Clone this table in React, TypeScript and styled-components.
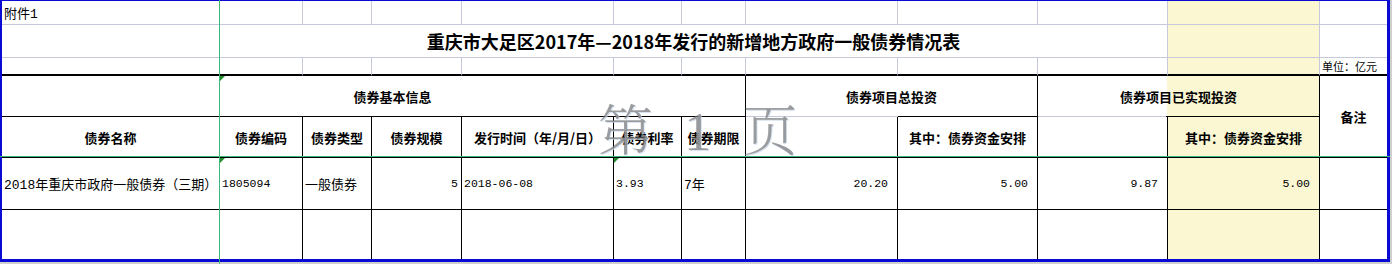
import React from 'react';
import styled, {createGlobalStyle} from 'styled-components';

const GRID = '#c6c9db'
const LINE = '#000'
const YELLOW = '#faf7d2'
const BLUE = '#0a0ad2'
const GREEN = '#3cb878'

type Edge = 'grid' | 'line' | 'thick' | 'none'

const edge = (e?: Edge) => {
    if (e === 'none') return 'none'
    if (e === 'thick') return `2px solid ${LINE}`
    if (e === 'line') return `1px solid ${LINE}`
    return `1px solid ${GRID}`
}

const GlobalStyle = createGlobalStyle`
  body {
    margin: 0;
    background: #cfcfcf;
  }
`

const Frame = styled.div`
  position: relative;
  width: 1390px;
  height: 264px;
`

const Sheet = styled.table`
  border-collapse: separate;
  border-spacing: 0;
  table-layout: fixed;
  width: 1390px;
  background: #fff;
  border-style: solid;
  border-color: ${BLUE};
  border-width: 1px 3px 3px 2px;
  font-family: "Liberation Mono", "Noto Sans CJK SC", monospace;
  font-size: 13px;
  color: #000;
`

const Col = styled.col<{ $w: number }>`
  width: ${p => p.$w}px;
`

const Row = styled.tr<{ $h: number }>`
  height: ${p => p.$h}px;
`

type CellProps = {
    $r?: Edge
    $b?: Edge
    $yellow?: boolean
}

const Cell = styled.td<CellProps>`
  position: relative;
  box-sizing: border-box;
  padding: 0 2px;
  border-right: ${p => edge(p.$r)};
  border-bottom: ${p => edge(p.$b)};
  background: ${p => (p.$yellow ? YELLOW : 'transparent')};
  vertical-align: middle;
  white-space: nowrap;
`

const HeadCell = styled(Cell)<{ $shift?: number }>`
  font-family: "Noto Sans CJK SC", sans-serif;
  font-weight: 700;
  font-size: 13px;
  text-align: center;
  padding-right: ${p => (p.$shift ? p.$shift : 2)}px;
`

// merged header whose lower edge is partly a grid line and partly a black rule
const SplitHead = styled(HeadCell)<{ $split: number; $fill?: boolean }>`
  border-right: 1px solid ${LINE};
  border-bottom: 1px solid ${LINE};
  border-image: linear-gradient(to right, ${GRID} ${p => p.$split}px, ${LINE} ${p => p.$split}px) 1;
  background: ${p => (p.$fill ? `linear-gradient(to right, #fff ${p.$split}px, ${YELLOW} ${p.$split}px)` : '#fff')};
`

const TitleCell = styled(Cell)`
  font-family: "Noto Sans CJK SC", sans-serif;
  font-weight: 700;
  font-size: 18px;
  text-align: center;
`

const NoteCell = styled(Cell)`
  font-family: "Noto Sans CJK SC", sans-serif;
  font-size: 11px;
  padding-left: 2px;
`

const DataCell = styled(Cell)<{ $num?: boolean; $right?: number }>`
  font-size: ${p => (p.$num ? '11.5px' : '13px')};
  text-align: ${p => (p.$right !== undefined ? 'right' : 'left')};
  padding-right: ${p => (p.$right !== undefined ? p.$right : 2)}px;
`

const Flag = styled.span`
  position: absolute;
  top: 0;
  left: 0;
  border-top: 5px solid #1f8f2a;
  border-right: 5px solid transparent;
`

const FreezeV = styled.div`
  position: absolute;
  left: 219px;
  top: 0;
  width: 1px;
  height: 264px;
  background: ${GREEN};
`

const FreezeH = styled.div`
  position: absolute;
  left: 0;
  top: 156px;
  width: 1390px;
  height: 1px;
  background: ${GREEN};
`

const Watermark = styled.div`
  position: absolute;
  left: 598px;
  top: 104px;
  display: flex;
  gap: 31px;
  font-family: "Liberation Serif", "Noto Serif CJK SC", "Noto Sans CJK SC", serif;
  font-weight: 300;
  font-size: 55px;
  line-height: 1;
  color: rgba(125, 125, 125, 0.72);
  text-shadow: 1px 1px 0 rgba(200, 215, 235, 0.7);
  pointer-events: none;
`

const cols = [218, 83, 69, 90, 152, 68, 64, 152, 140, 130, 152, 67]

const plainRow = (b: Edge) =>
    cols.map((_, i) => (
        <Cell key={i} $b={b} $r={i === 11 ? 'none' : 'grid'} $yellow={i === 10}/>
    ))

export default function App() {
    return (
        <>
            <GlobalStyle/>
            <Frame>
                <Sheet>
                    <colgroup>
                        {cols.map((w, i) => <Col key={i} $w={w}/>)}
                    </colgroup>
                    <tbody>
                    <Row $h={24}>
                        <DataCell>附件1</DataCell>
                        {plainRow('grid').slice(1)}
                    </Row>
                    <Row $h={33}>
                        <Cell/>
                        <TitleCell colSpan={9}>重庆市大足区2017年—2018年发行的新增地方政府一般债券情况表</TitleCell>
                        <Cell $yellow/>
                        <Cell $r="none"/>
                    </Row>
                    <Row $h={17}>
                        {plainRow('thick').slice(0, 11)}
                        <NoteCell $r="none" $b="thick">单位：亿元</NoteCell>
                    </Row>
                    <Row $h={41}>
                        <HeadCell $r="line" $b="line"/>
                        <HeadCell colSpan={6} $r="line" $b="line" $shift={182}>
                            <Flag/>债券基本信息
                        </HeadCell>
                        <SplitHead colSpan={2} $split={152}>债券项目总投资</SplitHead>
                        <SplitHead colSpan={2} $split={129} $fill>债券项目已实现投资</SplitHead>
                        <HeadCell rowSpan={2} $r="none" $b="line">备注</HeadCell>
                    </Row>
                    <Row $h={41}>
                        <HeadCell $r="line" $b="line">债券名称</HeadCell>
                        <HeadCell $r="line" $b="line">债券编码</HeadCell>
                        <HeadCell $r="line" $b="line">债券类型</HeadCell>
                        <HeadCell $r="line" $b="line">债券规模</HeadCell>
                        <HeadCell $r="line" $b="line">发行时间（年/月/日）</HeadCell>
                        <HeadCell $r="line" $b="line">债券利率</HeadCell>
                        <HeadCell $r="line" $b="line">债券期限</HeadCell>
                        <HeadCell $r="line" $b="line"/>
                        <HeadCell $r="line" $b="line">其中：债券资金安排</HeadCell>
                        <HeadCell $r="line" $b="line"/>
                        <HeadCell $r="line" $b="line" $yellow>其中：债券资金安排</HeadCell>
                    </Row>
                    <Row $h={52}>
                        <DataCell $r="line" $b="line">2018年重庆市政府一般债券（三期）</DataCell>
                        <DataCell $r="line" $b="line" $num><Flag/>1805094</DataCell>
                        <DataCell $r="line" $b="line">一般债券</DataCell>
                        <DataCell $r="line" $b="line" $num $right={3}>5</DataCell>
                        <DataCell $r="line" $b="line" $num>2018-06-08</DataCell>
                        <DataCell $r="line" $b="line" $num><Flag/>3.93</DataCell>
                        <DataCell $r="line" $b="line">7年</DataCell>
                        <DataCell $r="line" $b="line" $num $right={9}>20.20</DataCell>
                        <DataCell $r="line" $b="line" $num $right={9}>5.00</DataCell>
                        <DataCell $r="line" $b="line" $num $right={9}>9.87</DataCell>
                        <DataCell $r="line" $b="line" $num $right={9} $yellow>5.00</DataCell>
                        <DataCell $r="none" $b="line"/>
                    </Row>
                    <Row $h={49}>
                        {cols.map((_, i) => (
                            <Cell key={i} $b="none" $r={i === 11 ? 'none' : 'line'} $yellow={i === 10}/>
                        ))}
                    </Row>
                    </tbody>
                </Sheet>
                <FreezeV/>
                <FreezeH/>
                <Watermark>
                    <span>第</span>
                    <span>1</span>
                    <span>页</span>
                </Watermark>
            </Frame>
        </>
    );
}
